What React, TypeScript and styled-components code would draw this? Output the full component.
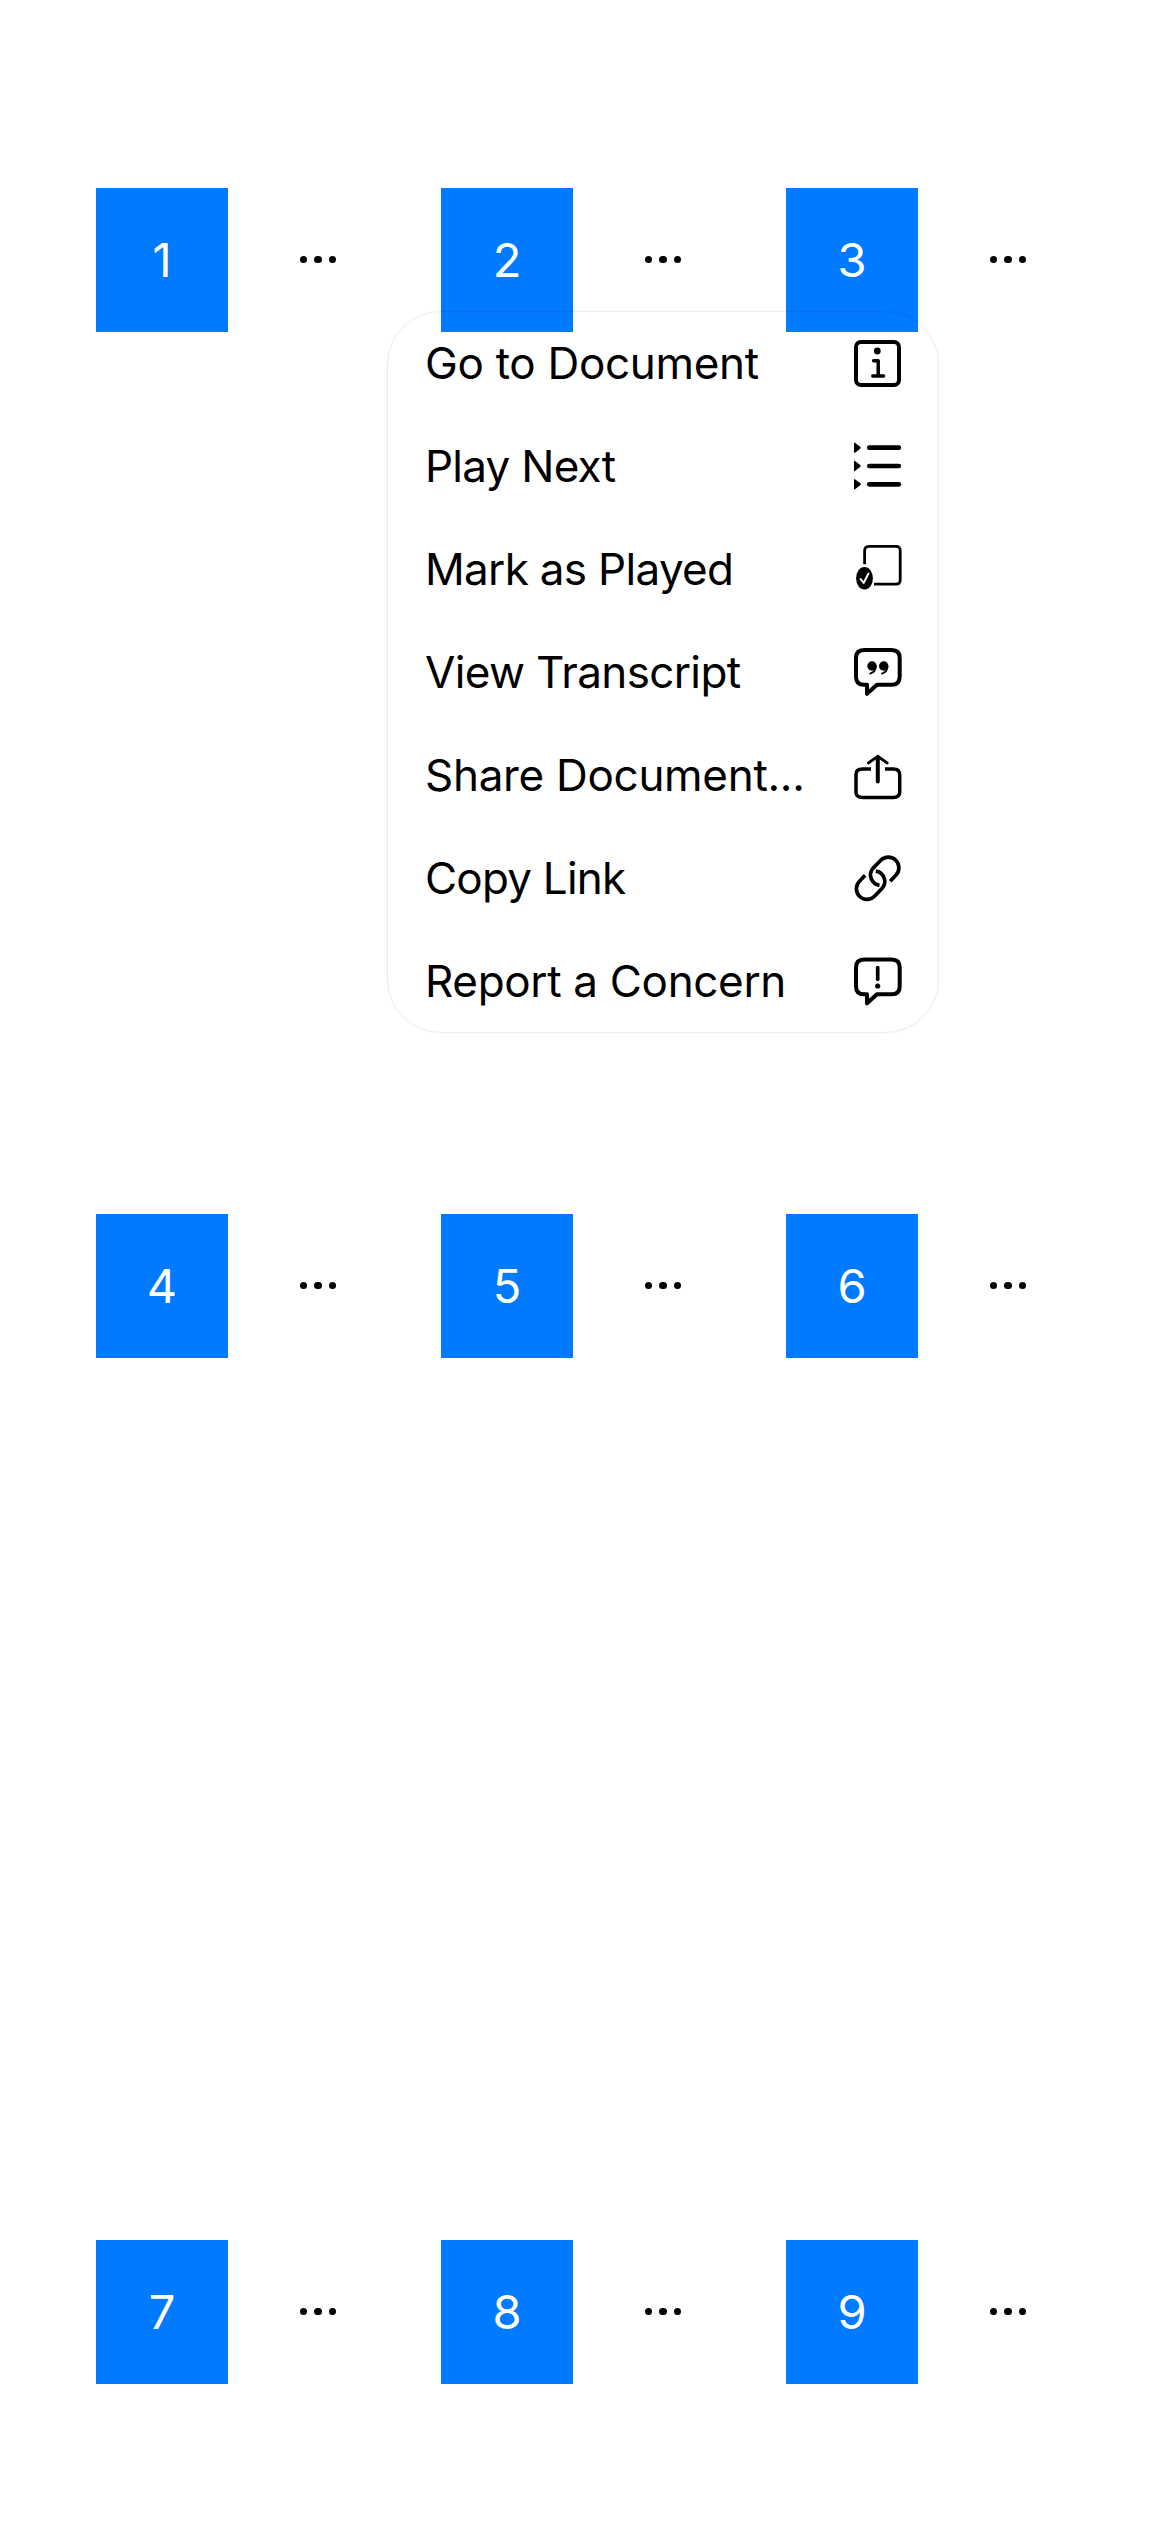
import React from "react";
import styled, { createGlobalStyle } from "styled-components";

const GlobalStyle = createGlobalStyle`
  *, *::before, *::after { box-sizing: border-box; }
  body { margin: 0; background: #fff; }
`;

const Screen = styled.main`
  position: relative;
  width: 1170px;
  height: 2532px;
  padding: 188px 0 0 96px;
  overflow: hidden;
  background: #fff;
  color: #000;
  font-family: Inter, "Liberation Sans", sans-serif;
`;

const Grid = styled.div`
  display: grid;
  grid-template-columns: repeat(3, 345px);
  grid-auto-rows: 1026px;
`;

const Cell = styled.div`
  display: flex;
  align-items: flex-start;
`;

const Tile = styled.div`
  display: flex;
  align-items: center;
  justify-content: center;
  width: 132px;
  height: 144px;
  background: #007aff;
  color: #fff;
  font-size: 47px;
  line-height: 56px;
`;

const MoreButton = styled.button`
  display: flex;
  align-items: center;
  justify-content: center;
  gap: 7px;
  width: 180px;
  height: 143px;
  padding: 0;
  border: 0;
  background: transparent;
`;

const Dot = styled.span`
  width: 7.3px;
  height: 7.3px;
  border-radius: 50%;
  background: #000;
`;

const Menu = styled.ul`
  position: absolute;
  left: 387px;
  top: 311px;
  width: 552px;
  height: 722px;
  margin: 0;
  padding: 0;
  list-style: none;
  border: 1px solid rgba(0, 0, 0, 0.075);
  border-radius: 54px;
  box-shadow: 0 0 2px rgba(0, 0, 0, 0.05);
`;

const MenuItem = styled.li`
  display: flex;
  align-items: center;
  justify-content: space-between;
  height: 103px;
  padding: 0 35px 1px 37px;
`;

const Label = styled.span<{ $tracking: number }>`
  font-size: 44px;
  line-height: 54px;
  letter-spacing: ${(p) => p.$tracking}px;
  white-space: nowrap;
`;

const Icon = styled.svg`
  flex: none;
  width: 50px;
  height: 60px;
  fill: none;
  stroke: #000;
  stroke-width: 4;
  stroke-linecap: round;
  stroke-linejoin: round;
`;

const bubble =
  "M11 8H38.7Q46.7 8 46.7 16V34.7Q46.7 42.7 38.7 42.7H24L14 51.8V42.7H11Q3 42.7 3 34.7V16Q3 8 11 8Z";

const InfoIcon = () => (
  <Icon viewBox="0 0 50 60">
    <rect x="3" y="9" width="43" height="43" rx="5" />
    <circle cx="24.3" cy="18" r="3.4" fill="#000" stroke="none" />
    <path d="M20.6 27.7H25.2V43M19.8 43H30.6" strokeWidth="3.5" />
  </Icon>
);

const QueueIcon = () => (
  <Icon viewBox="0 0 50 60">
    {[11.7, 30, 48.3].map((y) => (
      <g key={y}>
        <path
          d={`M1 ${y - 5}H2L7.2 ${y - 1}Q8.2 ${y} 7.2 ${y + 1}L2 ${y + 5}H1Z`}
          fill="#000"
          stroke="none"
        />
        <path d={`M16.3 ${y}H45.8`} strokeWidth="4.7" />
      </g>
    ))}
  </Icon>
);

const PlayedIcon = () => (
  <Icon viewBox="0 0 50 60">
    <g strokeLinecap="butt">
      <path
        d="M11.6 25.3V12Q11.6 7.4 16 7.4H43Q47.2 7.4 47.2 11.6V41Q47.2 45.1 43 45.1H21"
        strokeWidth="2.8"
      />
    </g>
    <ellipse cx="11.5" cy="39.2" rx="8.4" ry="11.3" fill="#000" stroke="none" />
    <path d="M7.6 40L10.6 44L15.5 34.5" stroke="#fff" strokeWidth="1.9" />
  </Icon>
);

const TranscriptIcon = () => (
  <Icon viewBox="0 0 50 60">
    <path d={bubble} />
    {[19, 30.7].map((x) => (
      <g key={x}>
        <circle cx={x} cy="24" r="4.7" fill="#000" stroke="none" />
        <path d={`M${x + 3.8} 24.5Q${x + 3.6} 30 ${x - 1.8} 31.6`} strokeWidth="1.9" />
      </g>
    ))}
  </Icon>
);

const ShareIcon = () => (
  <Icon viewBox="0 0 50 60">
    <g strokeLinecap="butt">
      <path
        d="M18 23.9H9.5Q3 23.9 3 29.4V47Q3 52.5 9.5 52.5H40.2Q46.7 52.5 46.7 47V29.4Q46.7 23.9 40.2 23.9H32"
        strokeWidth="3.5"
      />
    </g>
    <path d="M24.8 12V36.6" />
    <path d="M15.4 18L24.8 11.3L34.2 18" strokeWidth="2.8" />
  </Icon>
);

const LinkIcon = () => (
  <Icon viewBox="0 0 50 60">
    <g strokeLinecap="butt" strokeWidth="3.7">
      <path d="M37.2 33.2L42.8 27.2A10.6 10.6 0 0 0 27.8 12.2L19.9 20.4A10.4 10.4 0 0 0 26.5 37.3" />
      <path d="M12.1 27.2L6.5 33.2A10.6 10.6 0 0 0 21.5 48.2L29.4 40A10.4 10.4 0 0 0 22.8 23.1" />
    </g>
  </Icon>
);

const ReportIcon = () => (
  <Icon viewBox="0 0 50 60">
    <path d={bubble} transform="translate(0 0.5)" />
    <path d="M24.7 16.6V28.2" strokeWidth="3.7" />
    <circle cx="24.7" cy="35" r="2.6" fill="#000" stroke="none" />
  </Icon>
);

const items = [
  { label: "Go to Document", tracking: -0.31, Glyph: InfoIcon },
  { label: "Play Next", tracking: -0.74, Glyph: QueueIcon },
  { label: "Mark as Played", tracking: -0.68, Glyph: PlayedIcon },
  { label: "View Transcript", tracking: -0.64, Glyph: TranscriptIcon },
  { label: "Share Document...", tracking: -0.3, Glyph: ShareIcon },
  { label: "Copy Link", tracking: -0.78, Glyph: LinkIcon },
  { label: "Report a Concern", tracking: -0.33, Glyph: ReportIcon },
];

export default function App() {
  return (
    <Screen>
      <GlobalStyle />
      <Grid>
        {[1, 2, 3, 4, 5, 6, 7, 8, 9].map((n) => (
          <Cell key={n}>
            <Tile>{n}</Tile>
            <MoreButton aria-label="More">
              <Dot />
              <Dot />
              <Dot />
            </MoreButton>
          </Cell>
        ))}
      </Grid>
      <Menu>
        {items.map(({ label, tracking, Glyph }) => (
          <MenuItem key={label}>
            <Label $tracking={tracking}>{label}</Label>
            <Glyph />
          </MenuItem>
        ))}
      </Menu>
    </Screen>
  );
}
